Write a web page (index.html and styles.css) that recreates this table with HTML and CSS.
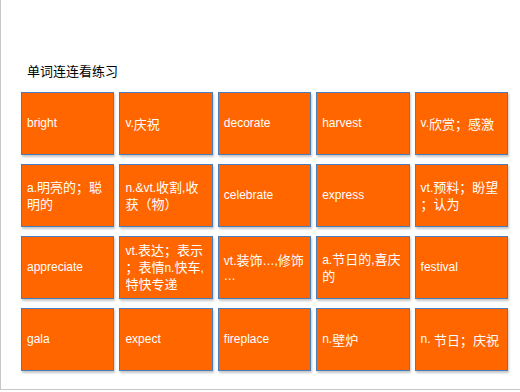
FILE: index.html
```html
<!DOCTYPE html>
<html lang="zh">
<head>
<meta charset="utf-8">
<title>单词连连看练习</title>
<link rel="stylesheet" href="styles.css">
</head>
<body>
<div class="slide">
  <h1 class="title">单词连连看练习</h1>
  <div class="grid">
    <div class="card">bright</div>
    <div class="card">v.<span class="zh">庆祝</span></div>
    <div class="card">decorate</div>
    <div class="card">harvest</div>
    <div class="card">v.<span class="zh">欣赏；感激</span></div>

    <div class="card"><p>a.<span class="zh">明亮的；聪<br>明的</span></p></div>
    <div class="card"><p>n.&amp;vt.<span class="zh">收割</span>,<span class="zh">收<br>获（物）</span></p></div>
    <div class="card">celebrate</div>
    <div class="card">express</div>
    <div class="card"><p>vt.<span class="zh">预料；盼望<br>；认为</span></p></div>

    <div class="card">appreciate</div>
    <div class="card"><p>vt.<span class="zh">表达；表示<br>；表情</span>n.<span class="zh">快车</span>,<br><span class="zh">特快专递</span></p></div>
    <div class="card"><p>vt.<span class="zh">装饰</span>…,<span class="zh">修饰</span><br>…</p></div>
    <div class="card"><p>a.<span class="zh">节日的</span>,<span class="zh">喜庆<br>的</span></p></div>
    <div class="card">festival</div>

    <div class="card">gala</div>
    <div class="card">expect</div>
    <div class="card">fireplace</div>
    <div class="card">n.<span class="zh">壁炉</span></div>
    <div class="card">n.&nbsp;<span class="zh">节日；庆祝</span></div>
  </div>
</div>
</body>
</html>
```
FILE: styles.css
```css
html, body {
  margin: 0;
  padding: 0;
  background: #ffffff;
}

.slide {
  box-sizing: border-box;
  width: 520px;
  height: 390px;
  border-left: 1px solid #c8c8c8;
  border-bottom: 1px solid #c8c8c8;
  padding: 61px 0 0 20px;
}

.title {
  margin: 0 0 12px 6px;
  font-family: "Noto Sans CJK SC", sans-serif;
  font-weight: normal;
  font-size: 13px;
  line-height: 19px;
  color: #000000;
}

.grid {
  width: 487px;
  display: grid;
  grid-template-columns: repeat(5, 1fr);
  grid-template-rows: repeat(4, 63px);
  column-gap: 5px;
  row-gap: 9px;
}

.card {
  box-sizing: border-box;
  display: flex;
  align-items: center;
  padding: 0 2px 0 5px;
  background: #ff6600;
  border: 1px solid #4a7ebb;
  box-shadow: 1px 2px 2px rgba(0, 0, 0, 0.22);
  color: #ffffff;
  font-family: "Liberation Sans", "Noto Sans CJK SC", sans-serif;
  font-size: 12px;
  line-height: 15px;
  white-space: nowrap;
}

.card p {
  margin: 0;
}

.zh {
  font-family: "Noto Sans CJK SC", sans-serif;
  font-size: 13px;
}
```
